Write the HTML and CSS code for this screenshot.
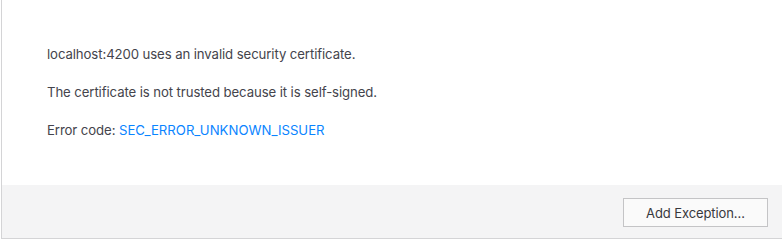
FILE: index.html
```html
<!DOCTYPE html>
<html lang="en">
<head>
<meta charset="utf-8">
<title>Certificate error</title>
<link rel="stylesheet" href="styles.css">
</head>
<body>
<div class="panel">
  <div class="content">
    <p class="line">localhost:4200 uses an invalid security certificate.</p>
    <p class="line">The certificate is not trusted because it is self-signed.</p>
    <p class="line">Error code: <a class="code" href="#">SEC_ERROR_UNKNOWN_ISSUER</a></p>
  </div>
  <div class="footer">
    <button class="btn" type="button">Add Exception…</button>
  </div>
</div>
</body>
</html>
```
FILE: styles.css
```css
html, body {
  margin: 0;
  padding: 0;
  background: #ffffff;
}
body {
  font-family: Inter, "Noto Sans", sans-serif;
  color: #44444c;
  width: 782px;
  height: 239px;
  overflow: hidden;
}
.panel {
  margin-left: 1px;
  width: 800px;
  height: 238px;
  border-left: 1px solid #d4d4d6;
  border-bottom: 1px solid #d4d4d6;
  display: flex;
  flex-direction: column;
}
.content {
  height: 185px;
  box-sizing: border-box;
  padding: 45px 0 0 45px;
  display: flex;
  flex-direction: column;
  gap: 20px;
}
.line {
  margin: 0;
  font-size: 13.2px;
  line-height: 18px;
  letter-spacing: -0.1px;
}
.code {
  color: #0a84ff;
  text-decoration: none;
  letter-spacing: 0;
}
.footer {
  flex: 1;
  background: #f4f4f5;
  padding: 13px 0 0 621px;
  box-sizing: border-box;
}
.btn {
  width: 145px;
  height: 29px;
  box-sizing: border-box;
  border: 1px solid #c4c4c6;
  background: #fafafa;
  color: #38383d;
  font-family: Inter, "Noto Sans", sans-serif;
  font-size: 13px;
  letter-spacing: -0.1px;
  padding: 0;
  border-radius: 0;
}
```
